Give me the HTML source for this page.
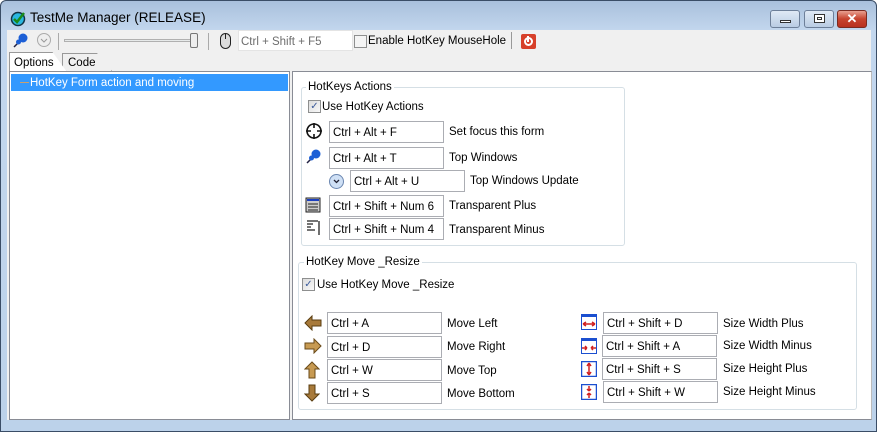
<!DOCTYPE html>
<html><head><style>
*{box-sizing:border-box;margin:0;padding:0}
body{width:877px;height:432px;overflow:hidden;font-family:"Liberation Sans",sans-serif;font-size:11.5px;color:#000;background:#fff;position:relative}
.a{position:absolute}
.win{left:0;top:0;width:877px;height:432px;border:1px solid #3a4d66;border-radius:6px 6px 0 0;background:linear-gradient(#a9c0dc,#c3d7ee 30px,#bcd2ea);}
.tb{border:1px solid #abadb3;background:#fff;height:22px;padding:5px 0 0 3px;color:#000;line-height:12px}
.lb{white-space:nowrap}
.grp{border:1px solid #d5dfe5;border-radius:3px}
.gt{background:#fff;padding:0 2px;white-space:nowrap}
.cb{width:13px;height:13px;border:1px solid #8e8f8f;background:linear-gradient(135deg,#dcdcdc,#f8f8f8)}
.btn{height:18px;border:1px solid #6d7f99;border-radius:3px;background:linear-gradient(#dfe9f5,#b9cce3)}
</style></head><body>
<div class="a win"></div>
<svg class="a" style="left:10px;top:10px" width="17" height="17" viewBox="0 0 17 17"><circle cx="8" cy="9" r="6.5" fill="#2ab7e0" stroke="#134" stroke-width="1.5"/><path d="M4 9l3 3 7-9" stroke="#1a8a1a" stroke-width="2.5" fill="none"/></svg>
<div class="a lb" style="left:30px;top:10px;font-size:13.5px;color:#000">TestMe Manager (RELEASE)</div>
<div class="a btn" style="left:770px;top:10px;width:30px"><div class="a" style="left:9px;top:9px;width:11px;height:3px;border:1px solid #333;background:#fff"></div></div>
<div class="a btn" style="left:804px;top:10px;width:30px"><div class="a" style="left:9px;top:3px;width:11px;height:9px;border:1px solid #333;background:#fff;box-shadow:inset 0 0 0 2px #fff,inset 0 0 0 3px #333"></div></div>
<div class="a" style="left:837px;top:10px;width:30px;height:18px;border:1px solid #7a2a20;border-radius:3px;background:linear-gradient(#e8a090,#c7432e 50%,#b83020);color:#fff;font-weight:bold;font-size:13px;text-align:center;line-height:16px">✕</div>
<div class="a" style="left:7px;top:30px;width:864px;height:390px;background:#f0f0f0"></div>
<svg class="a" style="left:12px;top:32px" width="17" height="17" viewBox="0 0 17 17"><path d="M2 15l5-5" stroke="#224" stroke-width="1.5"/><circle cx="11" cy="6" r="4.5" fill="#1c5fd6"/><circle cx="6.5" cy="10" r="2.5" fill="#1c5fd6"/></svg>
<svg class="a" style="left:36px;top:32px" width="16" height="16"><circle cx="8" cy="8" r="6.5" fill="#eee" stroke="#aaa"/><path d="M5 7l3 3 3-3" stroke="#999" fill="none"/></svg>
<div class="a" style="left:58px;top:33px;width:1px;height:17px;background:#aaa"></div>
<div class="a" style="left:64px;top:39px;width:134px;height:3px;border:1px solid #b0b0b0;background:#e7eaea"></div>
<div class="a" style="left:190px;top:33px;width:8px;height:15px;border:1px solid #777;border-radius:2px;background:#eee"></div>
<div class="a" style="left:208px;top:33px;width:1px;height:17px;background:#aaa"></div>
<svg class="a" style="left:219px;top:32px" width="14" height="18"><rect x="1.5" y="1.5" width="10" height="15" rx="5" fill="#ddd" stroke="#222"/><path d="M6.5 2v5" stroke="#222"/></svg>
<div class="a" style="left:238px;top:30px;width:115px;height:21px;background:#fff;border:1px solid #e4e4e4;color:#6d6d6d;padding:5px 0 0 2px;line-height:12px">Ctrl + Shift + F5</div>
<div class="a cb" style="left:354px;top:35px;background:#f4f4f4"></div>
<div class="a lb" style="left:368px;top:35px">Enable HotKey MouseHole</div>
<div class="a" style="left:511px;top:32px;width:1px;height:17px;background:#999"></div>
<div class="a" style="left:521px;top:34px;width:15px;height:15px;background:#d7402a;border-radius:2px"><div class="a" style="left:3px;top:3px;width:9px;height:9px;border:2px solid #fff;border-radius:50%"></div><div class="a" style="left:6px;top:2px;width:2px;height:6px;background:#fff"></div></div>
<div class="a" style="left:62px;top:53px;width:50px;height:18px;border:1px solid #999;border-bottom:none;background:#f0f0f0;clip-path:polygon(0 0,70% 0,100% 100%,0 100%)"></div>
<div class="a lb" style="left:68px;top:57px">Code</div>
<div class="a" style="left:9px;top:52px;width:58px;height:20px;border:1px solid #999;border-bottom:none;background:#fff;clip-path:polygon(0 0,75% 0,100% 100%,0 100%)"></div>
<div class="a lb" style="left:14px;top:57px">Options</div>
<div class="a" style="left:9px;top:71px;width:281px;height:349px;background:#fff;border:1px solid #898c95"></div>
<div class="a" style="left:11px;top:74px;width:277px;height:17px;background:#3399ff"></div>
<div class="a" style="left:20px;top:82px;width:9px;height:1px;background:#c8a070"></div>
<div class="a lb" style="left:30px;top:77px;color:#fff">HotKey Form action and moving</div>
<div class="a" style="left:292px;top:71px;width:580px;height:349px;background:#fff;border:1px solid #898c95;border-right-color:#bbb"></div>
<div class="a grp" style="left:301px;top:87px;width:324px;height:159px"></div>
<div class="a gt" style="left:306px;top:81px">HotKeys Actions</div>
<div class="a cb" style="left:308px;top:100px;text-align:center;font-size:10px;line-height:11px;color:#3b5a9a">✓</div>
<div class="a lb" style="left:322px;top:101px">Use HotKey Actions</div>
<svg class="a" style="left:305px;top:122px" width="18" height="18"><circle cx="9" cy="9" r="7" fill="none" stroke="#111" stroke-width="1.6"/><path d="M9 1v5M9 12v5M1 9h5M12 9h5" stroke="#111" stroke-width="1.6"/></svg>
<svg class="a" style="left:305px;top:148px" width="17" height="17"><path d="M2 15l5-5" stroke="#224" stroke-width="1.5"/><circle cx="11" cy="6" r="4.5" fill="#1c5fd6"/><circle cx="6.5" cy="10" r="2.5" fill="#1c5fd6"/></svg>
<svg class="a" style="left:328px;top:173px" width="17" height="17"><circle cx="8.5" cy="8.5" r="7" fill="#cfe0f5" stroke="#6a86b0"/><path d="M6 7l2.5 2.5L11 7" stroke="#223" fill="none" stroke-width="1.3"/></svg>
<svg class="a" style="left:305px;top:197px" width="16" height="16"><rect x="1" y="1" width="14" height="14" fill="#ccc" stroke="#222"/><rect x="2" y="2" width="12" height="2" fill="#1b3fc0"/><path d="M3 7h10M3 10h10M3 13h10" stroke="#222"/></svg>
<svg class="a" style="left:305px;top:219px" width="16" height="17"><path d="M2 2h11M2 5h6M2 8h4M2 11h8M14 2v14" stroke="#222" stroke-width="1.3"/></svg>
<div class="a tb" style="left:329px;top:121px;width:115px">Ctrl + Alt + F</div><div class="a lb" style="left:449px;top:126px">Set focus this form</div>
<div class="a tb" style="left:329px;top:147px;width:115px">Ctrl + Alt + T</div><div class="a lb" style="left:449px;top:152px">Top Windows</div>
<div class="a tb" style="left:350px;top:170px;width:115px">Ctrl + Alt + U</div><div class="a lb" style="left:470px;top:175px">Top Windows Update</div>
<div class="a tb" style="left:329px;top:195px;width:115px">Ctrl + Shift + Num 6</div><div class="a lb" style="left:449px;top:200px">Transparent Plus</div>
<div class="a tb" style="left:329px;top:218px;width:115px">Ctrl + Shift + Num 4</div><div class="a lb" style="left:449px;top:224px">Transparent Minus</div>
<div class="a grp" style="left:298px;top:262px;width:559px;height:148px"></div>
<div class="a gt" style="left:304px;top:256px">HotKey Move _Resize</div>
<div class="a cb" style="left:302px;top:278px;text-align:center;font-size:10px;line-height:11px;color:#3b5a9a">✓</div>
<div class="a lb" style="left:317px;top:279px">Use HotKey Move _Resize</div>
<svg class="a" style="left:304px;top:315px" width="18" height="16"><path d="M1 8l7-7v4h9v6H8v4z" fill="#a87a3a" stroke="#5a3d10"/></svg>
<svg class="a" style="left:304px;top:338px" width="18" height="16"><path d="M17 8l-7-7v4H1v6h9v4z" fill="#c79a52" stroke="#6a4a18"/></svg>
<svg class="a" style="left:304px;top:361px" width="16" height="18"><path d="M8 1L1 8h4v9h6V8h4z" fill="#c79a52" stroke="#6a4a18"/></svg>
<svg class="a" style="left:304px;top:384px" width="16" height="18"><path d="M8 17L1 10h4V1h6v9h4z" fill="#a87a3a" stroke="#5a3d10"/></svg>
<div class="a tb" style="left:327px;top:312px;width:115px">Ctrl + A</div><div class="a lb" style="left:447px;top:318px">Move Left</div>
<div class="a tb" style="left:327px;top:336px;width:115px">Ctrl + D</div><div class="a lb" style="left:447px;top:341px">Move Right</div>
<div class="a tb" style="left:327px;top:359px;width:115px">Ctrl + W</div><div class="a lb" style="left:447px;top:365px">Move Top</div>
<div class="a tb" style="left:327px;top:382px;width:115px">Ctrl + S</div><div class="a lb" style="left:447px;top:388px">Move Bottom</div>
<svg class="a" style="left:581px;top:314px" width="16" height="16"><rect x="0.5" y="0.5" width="15" height="15" fill="#fff" stroke="#1b4fd0"/><rect x="0" y="0" width="16" height="3" fill="#1b4fd0"/><path d="M2 10h12M2 10l3-2M2 10l3 2M14 10l-3-2M14 10l-3 2" stroke="#d02020" stroke-width="1.5"/></svg>
<svg class="a" style="left:581px;top:338px" width="16" height="16"><rect x="0.5" y="0.5" width="15" height="15" fill="#fff" stroke="#1b4fd0"/><rect x="0" y="0" width="16" height="3" fill="#1b4fd0"/><path d="M1 10h5M10 10h5M6 10l-2-2M6 10l-2 2M10 10l2-2M10 10l2 2" stroke="#d02020" stroke-width="1.5"/></svg>
<svg class="a" style="left:581px;top:361px" width="16" height="16"><rect x="0.5" y="0.5" width="15" height="15" fill="#fff" stroke="#1b4fd0" stroke-width="1.5"/><path d="M8 2v12M8 2l-2 3M8 2l2 3M8 14l-2-3M8 14l2-3" stroke="#d02020" stroke-width="1.5"/></svg>
<svg class="a" style="left:581px;top:384px" width="16" height="16"><rect x="0.5" y="0.5" width="15" height="15" fill="#fff" stroke="#1b4fd0" stroke-width="1.5"/><path d="M8 2v5M8 9v5M8 7l-2-2M8 7l2-2M8 9l-2 2M8 9l2 2" stroke="#d02020" stroke-width="1.5"/></svg>
<div class="a tb" style="left:603px;top:312px;width:115px">Ctrl + Shift + D</div><div class="a lb" style="left:723px;top:318px">Size Width Plus</div>
<div class="a tb" style="left:602px;top:335px;width:115px">Ctrl + Shift + A</div><div class="a lb" style="left:723px;top:340px">Size Width Minus</div>
<div class="a tb" style="left:602px;top:358px;width:115px">Ctrl + Shift + S</div><div class="a lb" style="left:723px;top:363px">Size Height Plus</div>
<div class="a tb" style="left:603px;top:381px;width:115px">Ctrl + Shift + W</div><div class="a lb" style="left:723px;top:386px">Size Height Minus</div>
</body></html>
